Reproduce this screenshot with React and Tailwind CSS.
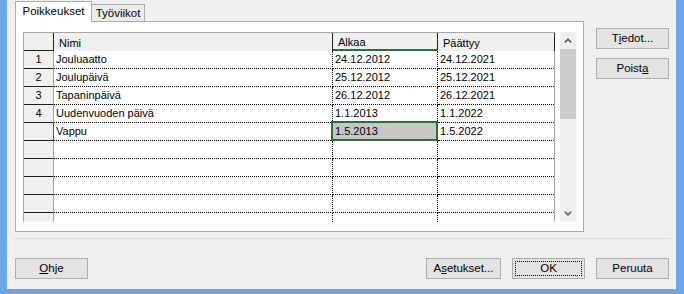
import React from "react";

const rows = [
  ["1", "Jouluaatto", "24.12.2012", "24.12.2021"],
  ["2", "Joulupäivä", "25.12.2012", "25.12.2021"],
  ["3", "Tapaninpäivä", "26.12.2012", "26.12.2021"],
  ["4", "Uudenvuoden päivä", "1.1.2013", "1.1.2022"],
  ["", "Vappu", "1.5.2013", "1.5.2022", true],
  ["", "", "", ""],
  ["", "", "", ""],
  ["", "", "", ""],
  ["", "", "", ""],
];

function Chevron({ up }) {
  return (
    <svg width="8" height="5" viewBox="0 0 8 5">
      <polyline
        points={up ? "0.8,4.3 4,1.2 7.2,4.3" : "0.8,0.7 4,3.8 7.2,0.7"}
        fill="none"
        stroke="#5f5f5f"
        strokeWidth="1.7"
      />
    </svg>
  );
}

function Btn({ children, className = "" }) {
  return (
    <div
      className={`relative h-[21px] w-[73px] shrink-0 border border-[#adadad] bg-[#e3e3e3] flex items-center justify-center text-[11.5px] text-black ${className}`}
    >
      {children}
    </div>
  );
}

function Row({ r }) {
  const [n, name, start, end, sel] = r;
  return (
    <div className="flex h-[18px] shrink-0">
      <div
        className={`w-[30px] shrink-0 bg-[#f0f0f0] border-b border-r border-b-[#1e1e1e] ${
          sel ? "border-r-[#217346]" : "border-r-[#a5a5a5]"
        } flex items-center justify-center`}
      >
        {n}
      </div>
      <div className="w-[279px] shrink-0 border-b border-r border-dotted border-black pl-[2px] flex items-center">
        {name}
      </div>
      <div className="relative w-[105px] shrink-0 border-b border-r border-dotted border-black pl-[2px] flex items-center">
        {sel ? (
          <div className="absolute -left-[2px] -top-[2px] -right-[1px] -bottom-[1px] border-2 border-[#2c6e33] bg-[#c6c6c6] pl-[2px] flex items-center">
            {start}
          </div>
        ) : (
          start
        )}
      </div>
      <div className="w-[116px] shrink-0 border-b border-dotted border-black pl-[2px] flex items-center">
        {end}
      </div>
    </div>
  );
}

export default function App() {
  return (
    <div className="w-[684px] h-[294px] bg-[#6ca6e9] pl-[7px] pr-[8px] pb-[5px] font-['Liberation_Sans',Arial,sans-serif] text-black">
      <div className="h-full bg-[#f0f0f0] flex flex-col">
        <div className="flex h-[232px] shrink-0">
          <div className="ml-[8px] w-[569px] flex flex-col">
            <div className="h-[21px] pt-[1px] flex items-end shrink-0">
              <div className="relative z-10 h-[21px] -mb-[1px] w-[77px] bg-white border-t border-l border-r border-[#acacac] flex items-center justify-center text-[11.5px]">
                Poikkeukset
              </div>
              <div className="h-[17px] w-[53px] bg-[#ececec] border-t border-r border-[#acacac] flex items-center justify-center text-[11.5px] pt-[1px]">
                Työviikot
              </div>
            </div>
            <div className="h-[211px] border border-[#acacac] bg-white pl-[7px] pr-[7px] pt-[10px] pb-[9px] flex">
              <div className="w-[532px] h-[190px] border-l border-[#a5a5a5] flex flex-col text-[11px]">
                <div className="h-[19px] border-t border-[#a5a5a5] flex shrink-0 bg-[#f0f0f0]">
                  <div className="w-[30px] h-full border-r border-b border-[#1e1e1e]" />
                  <div className="w-[279px] h-full border-r border-[#1e1e1e] pl-[5px] pt-[2px] flex items-center">
                    Nimi
                  </div>
                  <div className="w-[105px] h-full border-r border-r-[#1e1e1e] border-b-2 border-b-[#217346] pl-[5px] pt-[3px] flex items-center">
                    Alkaa
                  </div>
                  <div className="w-[117px] h-full border-r border-[#1e1e1e] pl-[5px] pt-[2px] flex items-center">
                    Päättyy
                  </div>
                </div>
                <div className="flex-1 border-r border-[#a5a5a5] flex flex-col">
                  {rows.map((r, i) => (
                    <Row key={i} r={r} />
                  ))}
                  <div className="flex flex-1">
                    <div className="w-[30px] bg-[#f0f0f0] border-r border-[#a5a5a5]" />
                    <div className="w-[279px] border-r border-dotted border-black" />
                    <div className="w-[105px] border-r border-dotted border-black" />
                    <div className="w-[116px]" />
                  </div>
                </div>
              </div>
              <div className="w-[16px] h-[190px] ml-[5px] bg-[#f0f0f0] flex flex-col">
                <div className="h-[17px] flex items-center justify-center">
                  <Chevron up />
                </div>
                <div className="h-[70px] bg-[#cdcdcd]" />
                <div className="flex-1" />
                <div className="h-[17px] flex items-center justify-center">
                  <Chevron />
                </div>
              </div>
            </div>
          </div>
          <div className="ml-[12px] pt-[28px] flex flex-col gap-[9px]">
            <Btn>
              T<span className="underline">i</span>edot...
            </Btn>
            <Btn>
              Poist<span className="underline">a</span>
            </Btn>
          </div>
        </div>
        <div className="mt-[6px] ml-[7px] w-[657px] h-px bg-[#dcdcdc] shrink-0" />
        <div className="mt-[19px] pl-[8px] pr-[7px] flex">
          <Btn>
            <span className="underline">O</span>hje
          </Btn>
          <div className="flex-1" />
          <Btn className="w-[75px]">
            A<span className="underline">s</span>etukset...
          </Btn>
          <Btn className="ml-[11px] border-[#3c8fdc]">
            <div className="absolute inset-[2px] border border-dotted border-black" />
            OK
          </Btn>
          <Btn className="ml-[11px]">Peruuta</Btn>
        </div>
      </div>
    </div>
  );
}
